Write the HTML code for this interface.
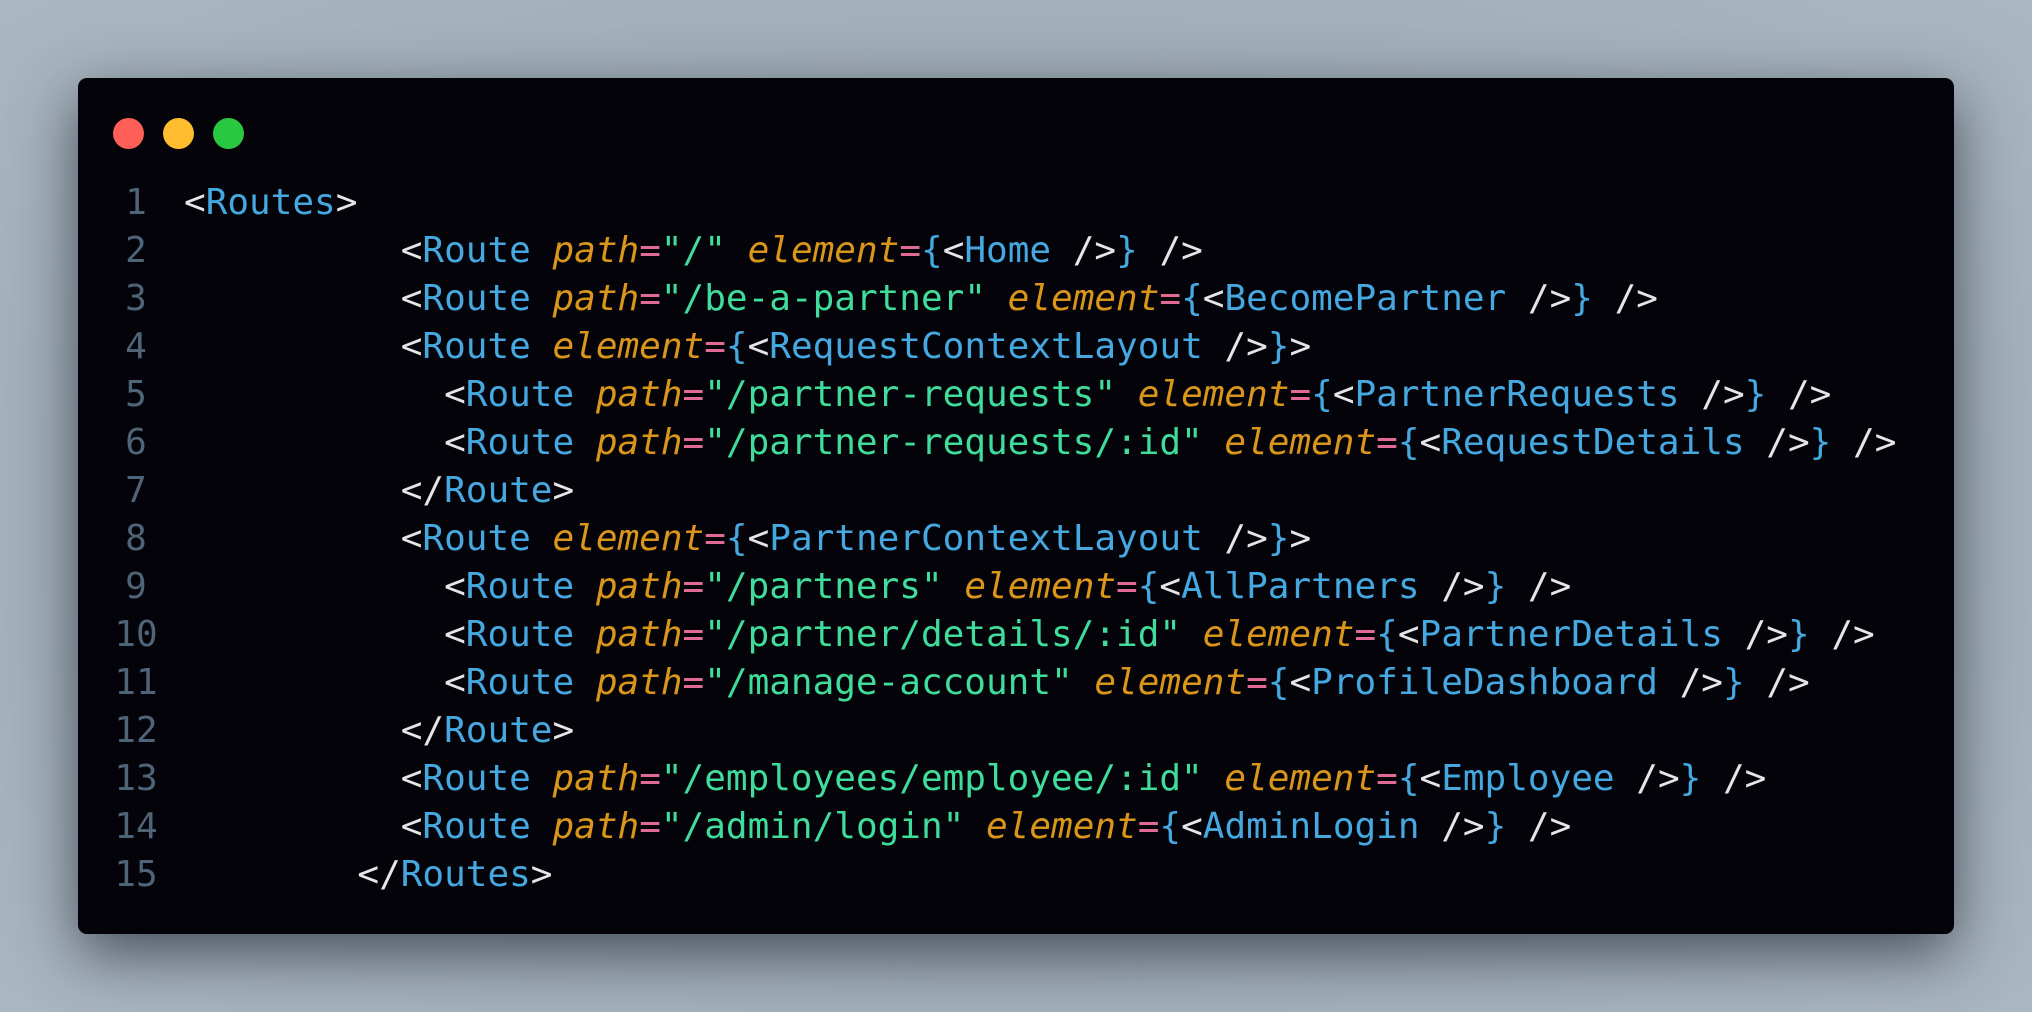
<!DOCTYPE html>
<html><head><meta charset="utf-8"><style>
html,body{margin:0;padding:0}
body{width:2032px;height:1012px;overflow:hidden;background:radial-gradient(ellipse at 50% 50%,#8e99a3 0%,#a3afba 70%,#aab6c1 100%);position:relative}
.win{position:absolute;left:78px;top:78px;width:1876px;height:856px;background:#030309;border-radius:9px;box-shadow:0 20px 60px rgba(40,48,58,.75)}
.dot{position:absolute;top:118px;width:31px;height:31px;border-radius:50%}
pre{position:absolute;left:114px;top:178.5px;margin:0;font-family:"DejaVu Sans Mono","Liberation Mono",monospace;font-size:36px;line-height:48px;color:#e6e6e6}
.n{color:#4f6478;display:inline-block;width:44px;text-align:center;margin-right:26px}
.t{color:#45a8e0}
.a{color:#d9961a;font-style:italic}
.e{color:#e06c95}
.s{color:#3fdc9c}
.b{color:#45a8e0}
</style></head><body>
<div class="win"></div>
<div class="dot" style="left:113px;background:#ff5f57"></div>
<div class="dot" style="left:163px;background:#febc2e"></div>
<div class="dot" style="left:213px;background:#28c840"></div>
<pre><span class="n">1</span>&lt;<span class="t">Routes</span>&gt;
<span class="n">2</span>          &lt;<span class="t">Route</span> <span class="a">path</span><span class="e">=</span><span class="s">"/"</span> <span class="a">element</span><span class="e">=</span><span class="b">{</span>&lt;<span class="t">Home</span> /&gt;<span class="b">}</span> /&gt;
<span class="n">3</span>          &lt;<span class="t">Route</span> <span class="a">path</span><span class="e">=</span><span class="s">"/be-a-partner"</span> <span class="a">element</span><span class="e">=</span><span class="b">{</span>&lt;<span class="t">BecomePartner</span> /&gt;<span class="b">}</span> /&gt;
<span class="n">4</span>          &lt;<span class="t">Route</span> <span class="a">element</span><span class="e">=</span><span class="b">{</span>&lt;<span class="t">RequestContextLayout</span> /&gt;<span class="b">}</span>&gt;
<span class="n">5</span>            &lt;<span class="t">Route</span> <span class="a">path</span><span class="e">=</span><span class="s">"/partner-requests"</span> <span class="a">element</span><span class="e">=</span><span class="b">{</span>&lt;<span class="t">PartnerRequests</span> /&gt;<span class="b">}</span> /&gt;
<span class="n">6</span>            &lt;<span class="t">Route</span> <span class="a">path</span><span class="e">=</span><span class="s">"/partner-requests/:id"</span> <span class="a">element</span><span class="e">=</span><span class="b">{</span>&lt;<span class="t">RequestDetails</span> /&gt;<span class="b">}</span> /&gt;
<span class="n">7</span>          &lt;/<span class="t">Route</span>&gt;
<span class="n">8</span>          &lt;<span class="t">Route</span> <span class="a">element</span><span class="e">=</span><span class="b">{</span>&lt;<span class="t">PartnerContextLayout</span> /&gt;<span class="b">}</span>&gt;
<span class="n">9</span>            &lt;<span class="t">Route</span> <span class="a">path</span><span class="e">=</span><span class="s">"/partners"</span> <span class="a">element</span><span class="e">=</span><span class="b">{</span>&lt;<span class="t">AllPartners</span> /&gt;<span class="b">}</span> /&gt;
<span class="n">10</span>            &lt;<span class="t">Route</span> <span class="a">path</span><span class="e">=</span><span class="s">"/partner/details/:id"</span> <span class="a">element</span><span class="e">=</span><span class="b">{</span>&lt;<span class="t">PartnerDetails</span> /&gt;<span class="b">}</span> /&gt;
<span class="n">11</span>            &lt;<span class="t">Route</span> <span class="a">path</span><span class="e">=</span><span class="s">"/manage-account"</span> <span class="a">element</span><span class="e">=</span><span class="b">{</span>&lt;<span class="t">ProfileDashboard</span> /&gt;<span class="b">}</span> /&gt;
<span class="n">12</span>          &lt;/<span class="t">Route</span>&gt;
<span class="n">13</span>          &lt;<span class="t">Route</span> <span class="a">path</span><span class="e">=</span><span class="s">"/employees/employee/:id"</span> <span class="a">element</span><span class="e">=</span><span class="b">{</span>&lt;<span class="t">Employee</span> /&gt;<span class="b">}</span> /&gt;
<span class="n">14</span>          &lt;<span class="t">Route</span> <span class="a">path</span><span class="e">=</span><span class="s">"/admin/login"</span> <span class="a">element</span><span class="e">=</span><span class="b">{</span>&lt;<span class="t">AdminLogin</span> /&gt;<span class="b">}</span> /&gt;
<span class="n">15</span>        &lt;/<span class="t">Routes</span>&gt;</pre>
</body></html>
